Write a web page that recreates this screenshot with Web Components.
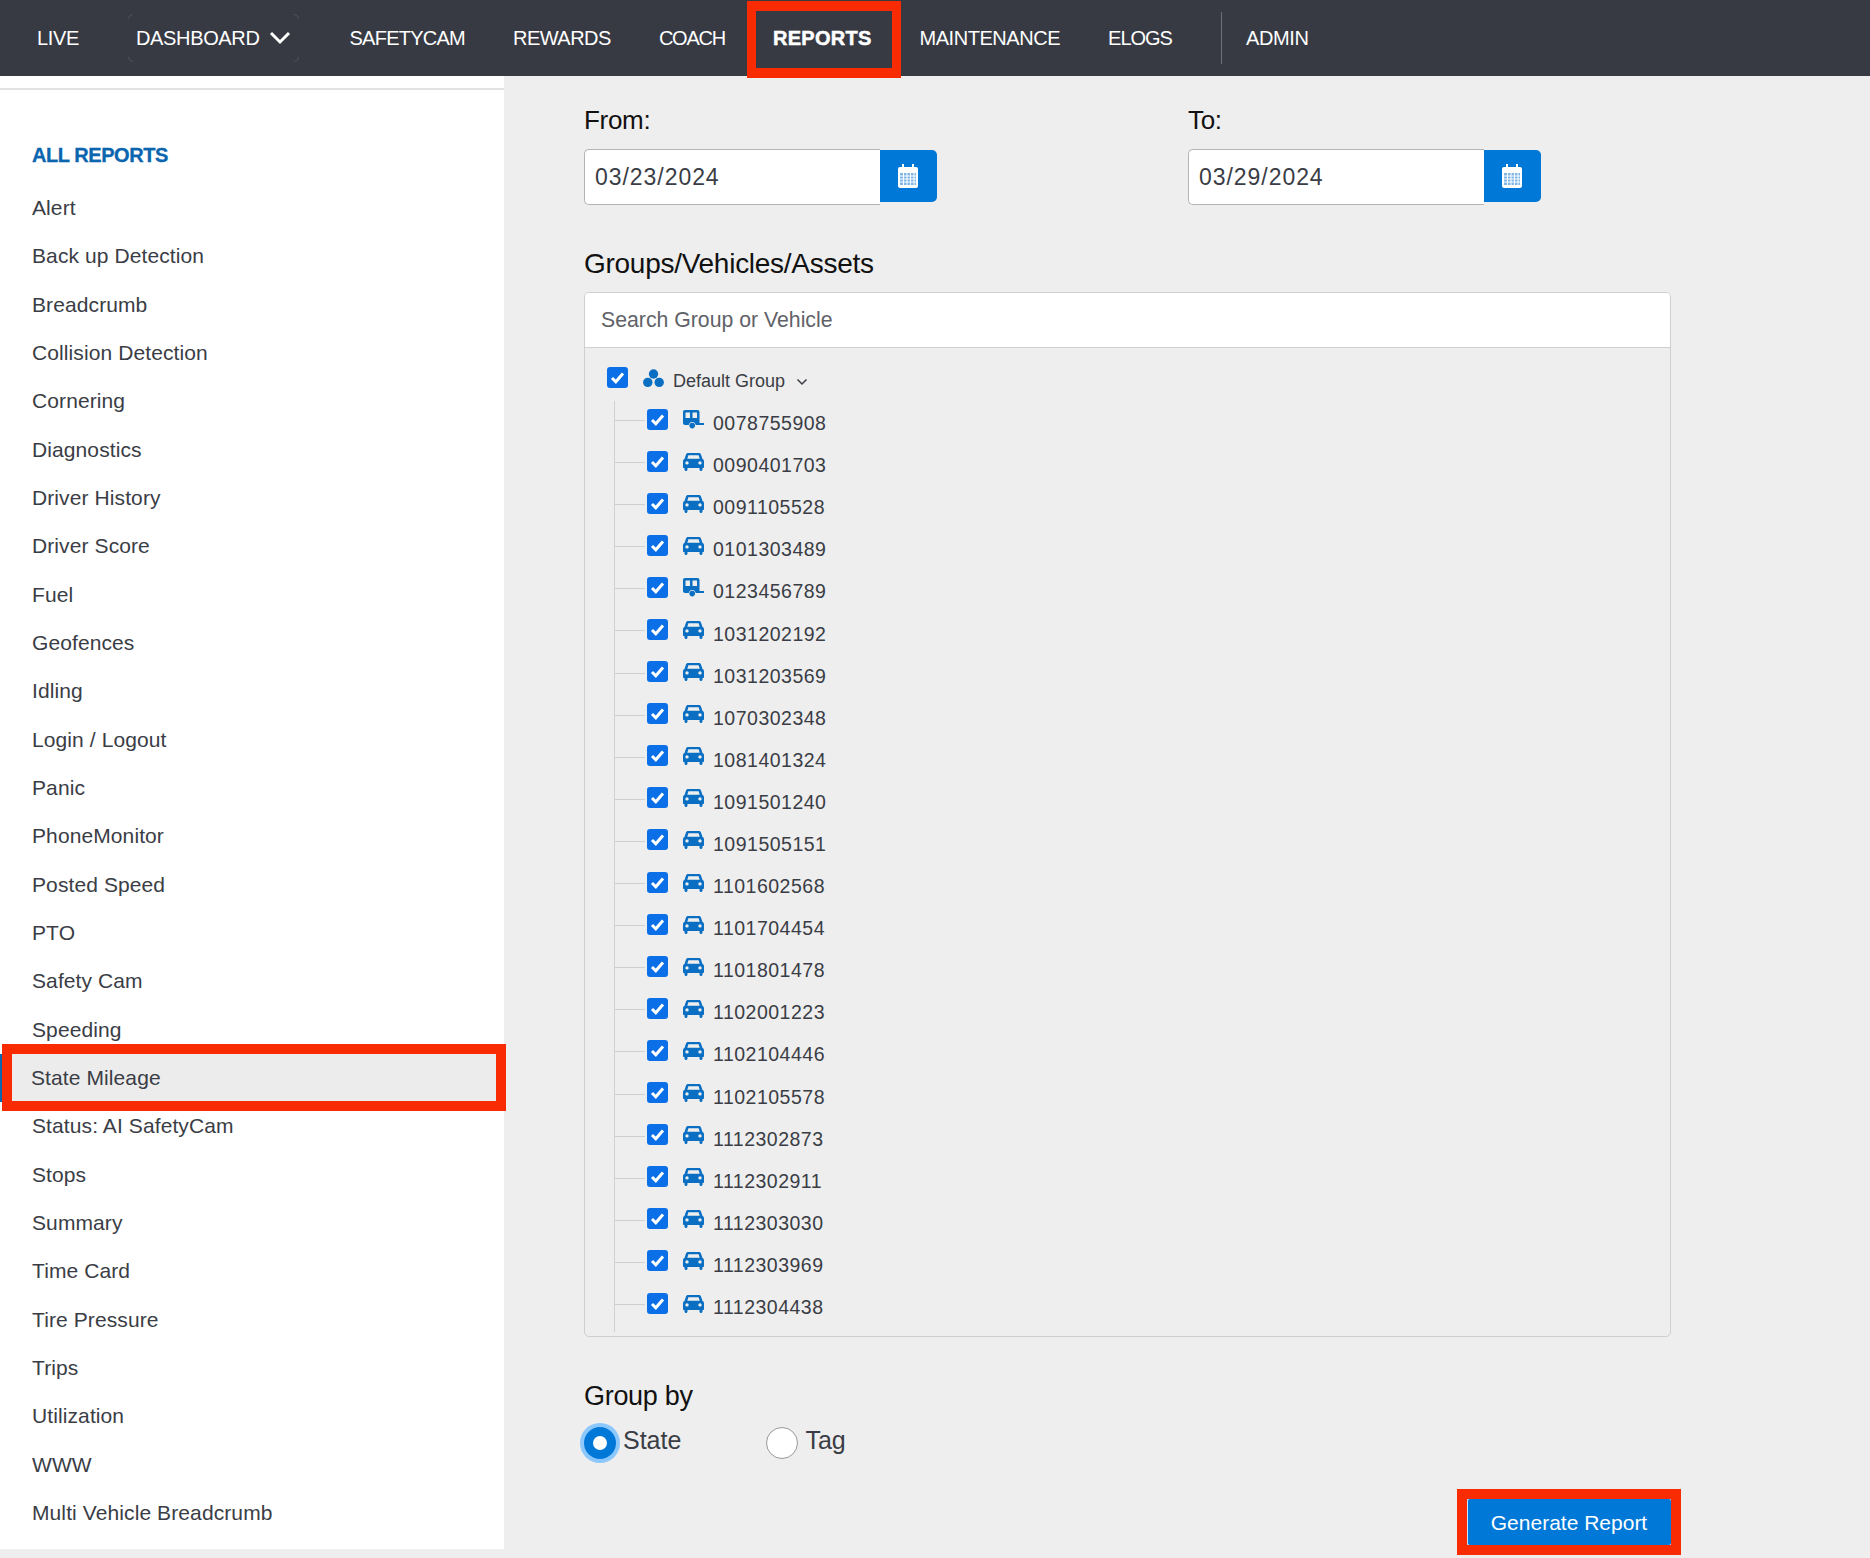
<!DOCTYPE html>
<html lang="en">
<head>
<meta charset="utf-8">
<title>State Mileage Report</title>
<style>
  html, body { margin: 0; padding: 0; background: #eeeeee; }
  body { font-family: "Liberation Sans", Arial, sans-serif; color: #3a3d45; }
</style>
</head>
<body>
<report-page></report-page>

<script>
const FONT = `"Liberation Sans", Arial, sans-serif`;

class TopNav extends HTMLElement {
  constructor() {
    super();
    this.attachShadow({ mode: "open" });
  }
  connectedCallback() {
    this.shadowRoot.innerHTML = `
      <style>
        :host { display: flex; align-items: center; height: 76px; background: #373a43; padding-left: 13px; font: 20px ${FONT}; color: #fff; position: relative; }
        a { padding: 0 24px; white-space: nowrap; letter-spacing: -0.35px; }
        .safety { letter-spacing: -0.75px; }
        .rewards { letter-spacing: -0.52px; }
        .coach { letter-spacing: -1.23px; }
        .maint { letter-spacing: -0.46px; }
        .elogs { letter-spacing: -1px; }
        .dash { display: flex; align-items: center; gap: 9px; height: 48px; margin: 0 27px 0 25px; padding: 0 8px; position: relative; }
        .dash::before { content: ""; position: absolute; inset: 0; border: 1px solid #55585f; border-radius: 5px;
          -webkit-mask-image: linear-gradient(to right, #000 5px, transparent 5px, transparent calc(100% - 5px), #000 calc(100% - 5px)), linear-gradient(to bottom, #000 5px, transparent 5px, transparent calc(100% - 5px), #000 calc(100% - 5px));
          mask-composite: intersect; -webkit-mask-composite: source-in; }
        .dash svg { display: block; }
        .active { font-weight: 700; position: relative; letter-spacing: 0.27px; -webkit-text-stroke: 0.5px #fff; }
        .active::after { content: ""; position: absolute; left: -2px; right: -5px; top: -26px; bottom: -28px; border: 10px solid #f92b03; border-width: 10px 9px; }
        .sep { width: 1px; height: 52px; background: #6d7078; margin-left: 25px; }
      </style>
      <a>LIVE</a>
      <a class="dash">DASHBOARD
        <svg width="22" height="14" viewBox="0 0 22 14"><path d="M2 2l9 9 9-9" fill="none" stroke="#fff" stroke-width="3"/></svg>
      </a>
      <a class="safety">SAFETYCAM</a>
      <a class="rewards">REWARDS</a>
      <a class="coach">COACH</a>
      <a class="active">REPORTS</a>
      <a class="maint">MAINTENANCE</a>
      <a class="elogs">ELOGS</a>
      <span class="sep"></span>
      <a>ADMIN</a>
    `;
  }
}
customElements.define("top-nav", TopNav);

class ReportSidebar extends HTMLElement {
  constructor() {
    super();
    this.attachShadow({ mode: "open" });
  }
  connectedCallback() {
    const reports = ["Alert", "Back up Detection", "Breadcrumb", "Collision Detection", "Cornering", "Diagnostics",
      "Driver History", "Driver Score", "Fuel", "Geofences", "Idling", "Login / Logout", "Panic", "PhoneMonitor",
      "Posted Speed", "PTO", "Safety Cam", "Speeding", "State Mileage", "Status: AI SafetyCam", "Stops", "Summary",
      "Time Card", "Tire Pressure", "Trips", "Utilization", "WWW", "Multi Vehicle Breadcrumb"];
    this.shadowRoot.innerHTML = `
      <style>
        :host { display: block; width: 504px; height: 1473px; background: #fff; font: 21px ${FONT}; color: #3a3d45; box-sizing: border-box; padding-top: 12px; }
        .rule { height: 2px; background: #e2e2e2; }
        h2 { margin: 0; height: 94px; box-sizing: border-box; padding: 52px 0 0 32px; font-size: 20px; line-height: 26px; font-weight: 700; color: #0a65ae; letter-spacing: -0.45px; -webkit-text-stroke: 0.3px #0a65ae; }
        ul { list-style: none; margin: 0; padding: 0; display: grid; grid-auto-rows: 48.33px; }
        li { padding-left: 32px; line-height: 48.33px; white-space: nowrap; letter-spacing: 0.1px; position: relative; }
        li.current { padding-left: 31px; }
        li.current::before { content: ""; position: absolute; left: 2px; right: -2px; top: -10px; bottom: -9px; border: 10px solid #f92b03; background: #ececec; z-index: 0; }
        li.current::after { content: ""; position: absolute; left: 0; width: 2px; top: 0; bottom: 0; background: #0a65ae; }
        li span { position: relative; z-index: 1; }
      </style>
      <div class="rule"></div>
      <h2>ALL REPORTS</h2>
      <ul>${reports.map(r => `<li class="${r === "State Mileage" ? "current" : ""}"><span>${r}</span></li>`).join("")}</ul>
    `;
  }
}
customElements.define("report-sidebar", ReportSidebar);

class DateField extends HTMLElement {
  constructor() {
    super();
    this.attachShadow({ mode: "open" });
  }
  connectedCallback() {
    this.shadowRoot.innerHTML = `
      <style>
        :host { display: block; width: 357px; font-family: ${FONT}; }
        label { display: block; font-size: 26px; line-height: 32px; color: #111; margin-bottom: 13px; letter-spacing: -0.3px; }
        .row { display: flex; align-items: center; }
        .value { width: 296px; height: 56px; box-sizing: border-box; background: #fff; border: 1px solid #b4b4b4; border-right: 0; border-radius: 5px 0 0 5px; padding-left: 10px; font-size: 23px; line-height: 55px; color: #3a3d45; letter-spacing: 0.95px; }
        button { width: 57px; height: 52px; margin-top: -2px; padding: 0 2px 0 0; border: 0; background: #0078d7; border-radius: 0 5px 5px 0; display: flex; align-items: center; justify-content: center; }
      </style>
      <label>${this.getAttribute("label")}</label>
      <div class="row">
        <div class="value">${this.getAttribute("value")}</div>
        <button>
          <svg width="20" height="24" viewBox="0 0 20 24">
            <rect x="0" y="3" width="20" height="21" rx="2" fill="#fff"/>
            <rect x="4" y="0" width="2" height="6" fill="#fff"/><rect x="14" y="0" width="2" height="6" fill="#fff"/>
            <path d="M2 9h16v12H2z" fill="#7fb6e6"/>
            <path d="M2 12h16M2 15h16M2 18h16M5.5 9v12M9 9v12M12.5 9v12M16 9v12" stroke="#fff" stroke-width="1"/>
          </svg>
        </button>
      </div>
    `;
  }
}
customElements.define("date-field", DateField);

const ICONS = {
  car: `<svg width="21" height="19" viewBox="0 0 21 19"><path fill="#0a6fc2" fill-rule="evenodd" d="M5 1h11c1 0 1.700.6 2 1.500l1.400 4.300c.9.500 1.600 1.400 1.600 2.500V15c0 .6-.4 1-1 1h-.5v1.500c0 .8-.7 1.500-1.500 1.500s-1.500-.7-1.500-1.500V16H4.500v1.500C4.500 18.300 3.800 19 3 19s-1.500-.7-1.500-1.500V16H1c-.6 0-1-.4-1-1V9.300c0-1.100.7-2 1.600-2.500L3 2.500C3.300 1.600 4 1 5 1zM5.400 3.300 4.300 6.700h12.400l-1.100-3.400zM4 9.200a1.700 1.700 0 1 0 0 3.400 1.700 1.700 0 0 0 0-3.400zm13 0a1.700 1.700 0 1 0 0 3.400 1.700 1.700 0 0 0 0-3.400z"/></svg>`,
  trailer: `<svg width="21" height="19" viewBox="0 0 21 19"><path fill="#0a6fc2" fill-rule="evenodd" d="M2 0h12.500c1.100 0 2 .9 2 2v11H21v2h-8.300a3.600 3.600 0 0 0-6.900-.6V15H2c-1.100 0-2-.9-2-2V2C0 .9.900 0 2 0zM2.500 2.500V8H7V2.500zM9.500 2.500V8H14V2.500z"/><circle cx="9.200" cy="15.600" r="2.800" fill="#0a6fc2"/></svg>`,
  group: `<svg width="21" height="19" viewBox="0 0 21 19"><g fill="#0a6fc2"><circle cx="10.500" cy="5" r="4.700"/><circle cx="4.800" cy="13.400" r="4.700"/><circle cx="16.200" cy="13.400" r="4.700"/></g></svg>`,
};

class TreeCheck extends HTMLElement {
  constructor() {
    super();
    this.attachShadow({ mode: "open" });
  }
  connectedCallback() {
    this.shadowRoot.innerHTML = `
      <style>
        :host { display: block; width: 21px; height: 21px; background: #0b70e8; border-radius: 3px; }
        svg { display: block; }
      </style>
      <svg width="21" height="21" viewBox="0 0 21 21"><path d="M5 11l3.800 3.800L16 6.500" fill="none" stroke="#fff" stroke-width="3"/></svg>
    `;
  }
}
customElements.define("tree-check", TreeCheck);

class TreeRow extends HTMLElement {
  constructor() {
    super();
    this.attachShadow({ mode: "open" });
  }
  connectedCallback() {
    this.shadowRoot.innerHTML = `
      <style>
        :host { display: flex; align-items: center; height: 42.1px; position: relative; font: 19.5px ${FONT}; color: #3a3d45; }
        :host::before { content: ""; position: absolute; left: -32px; width: 30px; top: 19px; height: 1px; background: #cfcfcf; }
        tree-check { margin: -6px 15px 0 0; }
        .icon { display: block; margin: -6px 9px 0 0; }
        .icon svg { display: block; }
        span.name { letter-spacing: 0.5px; line-height: 22px; margin-top: 2px; }
      </style>
      <tree-check></tree-check>
      <span class="icon">${ICONS[this.getAttribute("icon")]}</span>
      <span class="name">${this.getAttribute("name")}</span>
    `;
  }
}
customElements.define("tree-row", TreeRow);

class VehicleTree extends HTMLElement {
  constructor() {
    super();
    this.attachShadow({ mode: "open" });
  }
  connectedCallback() {
    const trailers = ["0078755908", "0123456789"];
    const vehicles = ["0078755908", "0090401703", "0091105528", "0101303489", "0123456789", "1031202192", "1031203569",
      "1070302348", "1081401324", "1091501240", "1091505151", "1101602568", "1101704454", "1101801478", "1102001223",
      "1102104446", "1102105578", "1112302873", "1112302911", "1112303030", "1112303969", "1112304438"];
    this.shadowRoot.innerHTML = `
      <style>
        :host { display: block; width: 1087px; height: 1045px; box-sizing: border-box; border: 1px solid #cfcfcf; border-radius: 5px; font-family: ${FONT}; }
        .search { height: 55px; box-sizing: border-box; background: #fff; border-bottom: 1px solid #cfcfcf; border-radius: 4px 4px 0 0; padding-left: 16px; font-size: 21.25px; line-height: 54px; color: #606268; }
        .parent { display: flex; align-items: center; height: 42px; margin: 12px 0 0 22px; font-size: 18px; color: #3a3d45; }
        .parent tree-check { margin: -7px 15px 0 0; }
        .parent svg.g { margin: -6px 9px 0 0; display: block; }
        .parent svg.c { margin: 2px 0 0 11px; }
        .kids { margin: -1px 0 0 29px; padding-left: 32px; border-left: 1px solid #cfcfcf; height: 931px; }
      </style>
      <div class="search">Search Group or Vehicle</div>
      <div class="parent">
        <tree-check></tree-check>
        <span class="g">${ICONS.group.replace("<svg", '<svg class="g"')}</span>
        <span>Default Group</span>
        <svg class="c" width="12" height="8" viewBox="0 0 12 8"><path d="M1.500 1.500 6 6l4.500-4.500" fill="none" stroke="#3a3d45" stroke-width="1.500"/></svg>
      </div>
      <div class="kids">
        ${vehicles.map(v => `<tree-row icon="${trailers.includes(v) ? "trailer" : "car"}" name="${v}"></tree-row>`).join("")}
      </div>
    `;
  }
}
customElements.define("vehicle-tree", VehicleTree);

class RadioOption extends HTMLElement {
  constructor() {
    super();
    this.attachShadow({ mode: "open" });
  }
  connectedCallback() {
    const on = this.hasAttribute("checked");
    this.shadowRoot.innerHTML = `
      <style>
        :host { display: flex; align-items: center; gap: 7px; font: 25px ${FONT}; color: #3a3d45; }
        i { display: block; width: 32px; height: 32px; box-sizing: border-box; border-radius: 50%; background: #fff; border: 1px solid #999; margin-top: 2px; }
        i.on { border: 9px solid #0078d7; box-shadow: 0 0 0 4px #8cc8fb; }
        span { margin-top: -4px; }
      </style>
      <i class="${on ? "on" : ""}"></i><span>${this.getAttribute("label")}</span>
    `;
  }
}
customElements.define("radio-option", RadioOption);

class GenerateButton extends HTMLElement {
  constructor() {
    super();
    this.attachShadow({ mode: "open" });
  }
  connectedCallback() {
    this.shadowRoot.innerHTML = `
      <style>
        :host { display: block; width: 224px; height: 66px; box-sizing: border-box; border: 10px solid #f92b03; }
        button { display: block; width: 100%; height: 100%; padding: 2px 0 0; border: 0; border-radius: 2px; background: #0078d7; color: #fff; font: 21px ${FONT}; box-shadow: inset 1px 0 0 #cfe4f7; }
      </style>
      <button><slot></slot></button>
    `;
  }
}
customElements.define("generate-button", GenerateButton);

class ReportPage extends HTMLElement {
  constructor() {
    super();
    this.attachShadow({ mode: "open" });
  }
  connectedCallback() {
    this.shadowRoot.innerHTML = `
      <style>
        :host { display: block; width: 1870px; height: 1558px; overflow: hidden; background: #eeeeee; font-family: ${FONT}; }
        .body { display: flex; }
        main { padding: 28px 0 0 80px; width: 1100px; }
        .dates { display: flex; gap: 247px; }
        h3 { font-weight: 400; font-size: 27px; line-height: 32px; color: #111; margin: 0; letter-spacing: -0.3px; }
        .groups { margin: 43px 0 12px; font-size: 28px; letter-spacing: -0.27px; }
        .groupby { margin: 43px 0 13px; }
        .radios { display: flex; gap: 85px; }
        .actions { display: flex; justify-content: flex-end; margin: 30px 0 0 0; width: 1097px; }
      </style>
      <top-nav></top-nav>
      <div class="body">
        <report-sidebar></report-sidebar>
        <main>
          <div class="dates">
            <date-field label="From:" value="03/23/2024"></date-field>
            <date-field label="To:" value="03/29/2024"></date-field>
          </div>
          <h3 class="groups">Groups/Vehicles/Assets</h3>
          <vehicle-tree></vehicle-tree>
          <h3 class="groupby">Group by</h3>
          <div class="radios">
            <radio-option label="State" checked></radio-option>
            <radio-option label="Tag"></radio-option>
          </div>
          <div class="actions"><generate-button>Generate Report</generate-button></div>
        </main>
      </div>
    `;
  }
}
customElements.define("report-page", ReportPage);
</script>
</body>
</html>
